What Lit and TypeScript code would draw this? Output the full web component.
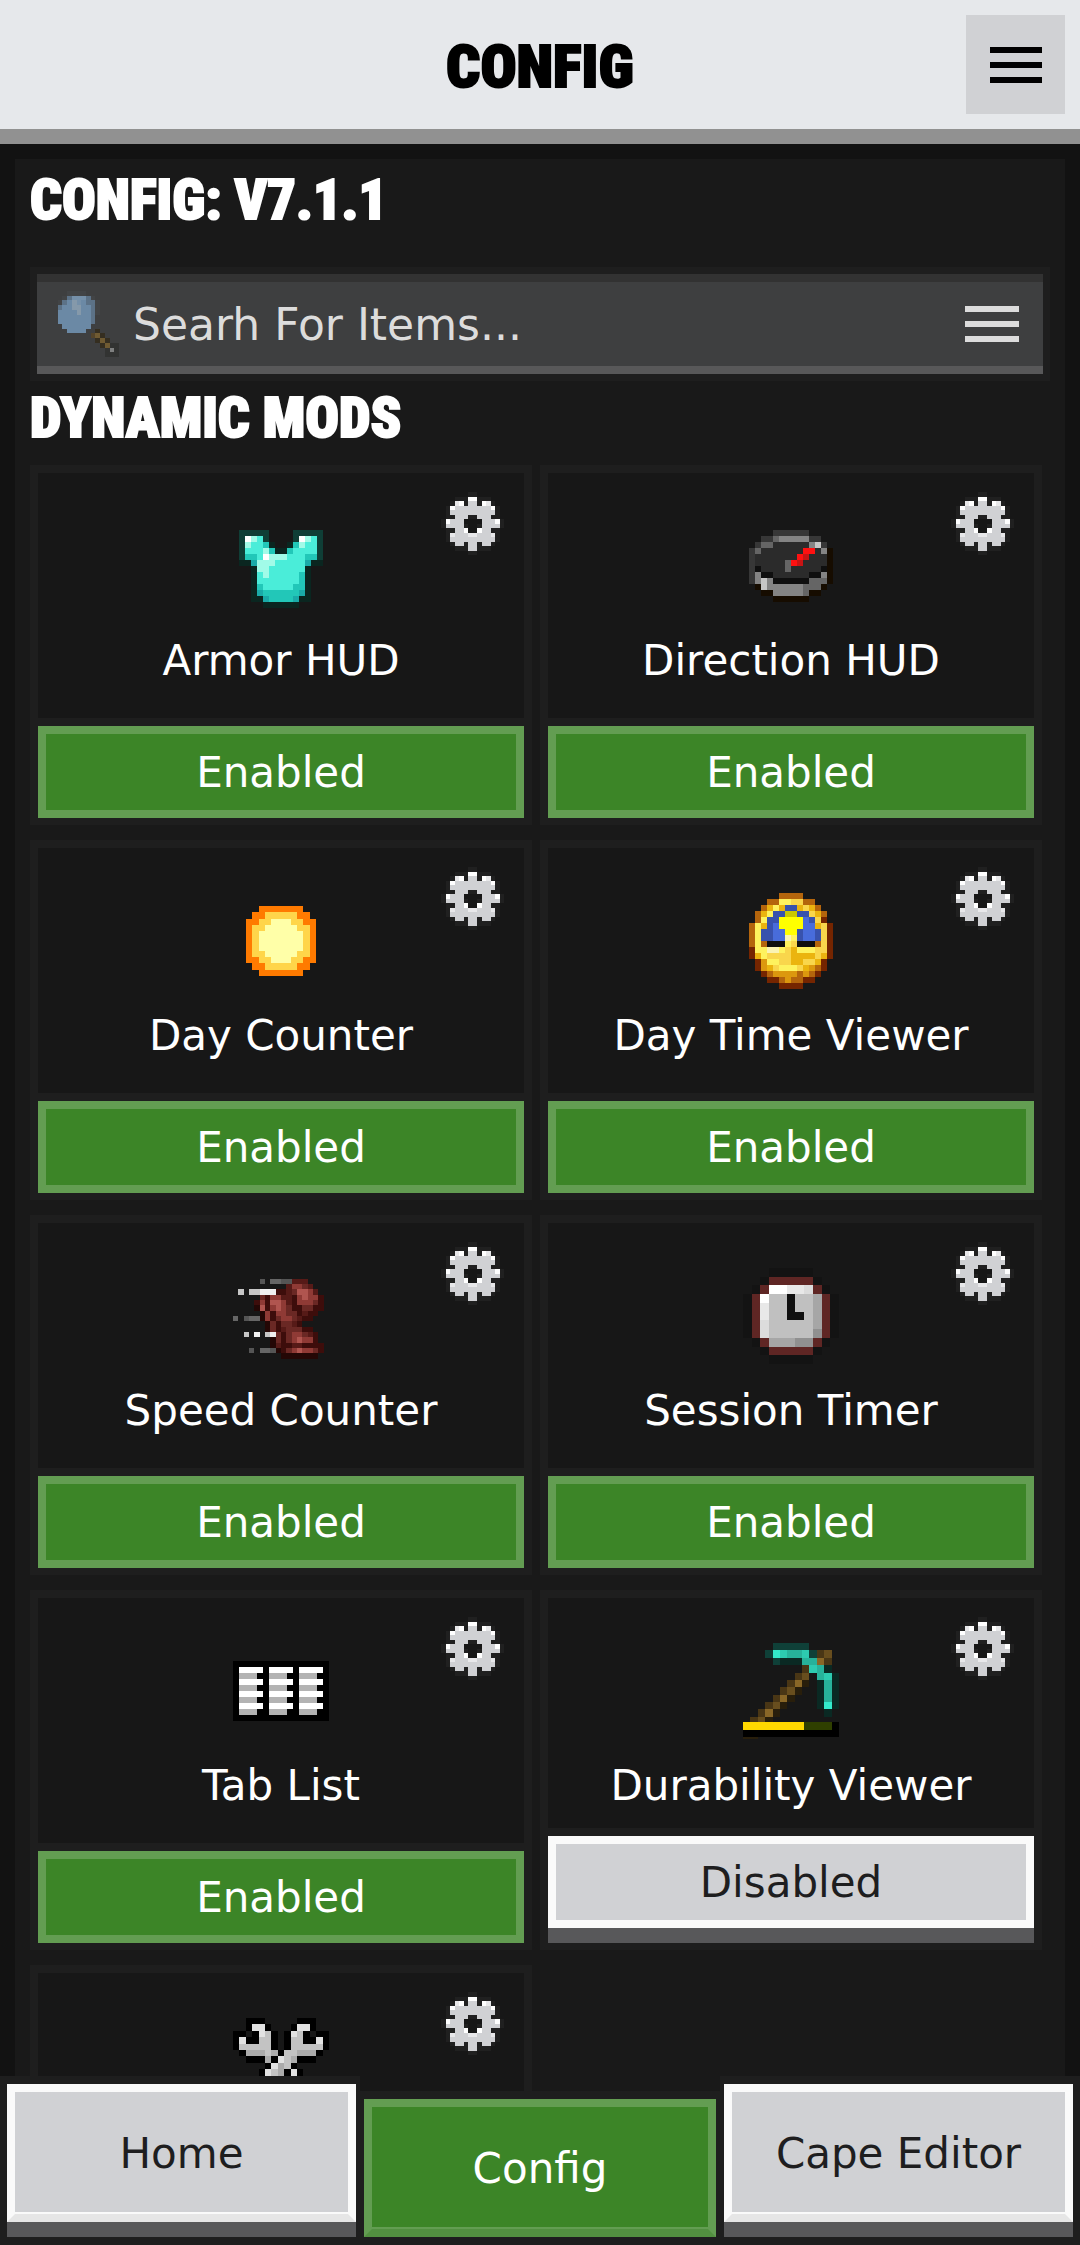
import { LitElement, html, svg, css, nothing } from "lit";
import { customElement, property, state } from "lit/decorators.js";

type Palette = Record<string, string>;
interface Sprite {
  cols: number;
  lines: number;
  rows: string[];
  colors: Palette;
}

const GEAR: Sprite = {
  cols: 14,
  lines: 14,
  colors: { k: "#202020", h: "#171717", W: "#ffffff", l: "#e8e8ea", g: "#d0d1d4" },
  rows: [
    "......kk......",
    "...kkkWWkkk...",
    "..klWkggkWlk..",
    ".kWggggggggWk.",
    ".kggggggggggk.",
    ".kkgggkkgggkk.",
    "kWggghhhhgggWk",
    "kggggkhhkggggk",
    ".kkggWhhWggkk.",
    ".klgggllggglk.",
    ".kggggggggggk.",
    "..kggkggkggk..",
    "...kkkggkkk...",
    "......kk......",
  ],
};

const LENS: Sprite = {
  cols: 14,
  lines: 14,
  colors: {
    f: "#424446", q: "#5c7287", B: "#6b89a5", m: "#7590a9", l: "#8599aa",
    d: "#352e20", t: "#54442a", T: "#6f5a32", e: "#323332", g: "#7f8080",
  },
  rows: [
    "...ffff.......",
    "..fqmmmqf.....",
    ".fqBlmBqqf....",
    ".qBBllBBqf....",
    ".BBBBlBBqf....",
    ".BBBBBBBq.....",
    ".BBBBBBBq.....",
    "..BBBBBB......",
    "...BBBB..d....",
    "........tTd...",
    ".........dTd..",
    "..........dTee",
    "...........ege",
    "...........eee",
  ],
};

const ARMOR: Sprite = {
  cols: 16,
  lines: 16,
  colors: {
    a: "#0f3e36", b: "#0a2620", W: "#ffffff", L: "#a1fbe8",
    M: "#4aedd9", D: "#22c7b8", E: "#1aaaa8",
  },
  rows: [
    "",
    "",
    ".aaaaa....aaaaa.",
    ".aWLMa....aWLMa.",
    ".aLMMDb..bDLMMa.",
    ".aMMMLDbbDMMMMa.",
    ".aDDMWLLLMMMDDa.",
    ".bbELLLMMMMMEbb.",
    "...bLLMMMMMMb...",
    "...bMLMMMMMDb...",
    "...bMMMMMMMDb...",
    "...bDMMMMMDDb...",
    "...bEDDDDDDEb...",
    "...bbEDDDDEbb...",
    ".....bbbbbb.....",
  ],
};

const COMPASS: Sprite = {
  cols: 16,
  lines: 16,
  colors: {
    d: "#373737", g: "#656565", G: "#848484", w: "#c6c6c6", k: "#2b2b2b",
    n: "#0f0f0f", R: "#ff1111", r: "#c91414", o: "#160c00",
  },
  rows: [
    "",
    "",
    ".....dddddd.....",
    "...ddgGGGGGdd...",
    "..dggkkkkkkGwd..",
    ".dgkkkkkkkRRkGo.",
    ".dkkkkkkkRrkkko.",
    ".dkkkkkgRrkkkko.",
    ".dnkkkkgkkkkkno.",
    ".dGnnkkkkkknnGo.",
    ".dGwGnnnnnngggo.",
    "..owGGGGGGgggo..",
    "...ooGGGGGgoo...",
    ".....oooooo.....",
  ],
};

const SUN: Sprite = {
  cols: 15,
  lines: 15,
  colors: { o: "#ff7a00", y: "#ffd54a", p: "#ffffa8" },
  rows: [
    "",
    "",
    "....ooooooo....",
    "...ooyyyyyoo...",
    "..ooyypppyyoo..",
    "..oyypppppyyo..",
    "..oypppppppyo..",
    "..oypppppppyo..",
    "..oypppppppyo..",
    "..oyypppppyyo..",
    "..ooyypppyyoo..",
    "...ooyyyyyoo...",
    "....ooooooo....",
  ],
};

const CLOCK: Sprite = {
  cols: 16,
  lines: 16,
  colors: {
    b: "#b4650c", y: "#fef25e", Y: "#f9d64c", G: "#ebb40f", g: "#dc980e",
    B: "#3852ad", S: "#486cdb", R: "#752500", o: "#cac800", Q: "#ffff00",
    K: "#0e0e0e", C: "#faf3b4",
  },
  rows: [
    "......bbbb......",
    "....bbyyYYbb....",
    "...bGyGBBGYGb...",
    "..bGyBBooBBYGb..",
    "..byBBQQQQSBYR..",
    ".byGBSQQQQSSGYR.",
    ".byBBSSQQBSSBYR.",
    ".byBBSSCyBSSBYR.",
    ".bybKKKyYKKKbYR.",
    ".RyyCCyYGyyyYYR.",
    ".RGyYYYYGGGGYGR.",
    "..RgyyYYGGYYGR..",
    "..RgGYyyyYGgbR..",
    "...RbggggbgbR...",
    "....RRbgbbRR....",
    "......RRRR......",
  ],
};

const BOOT: Sprite = {
  cols: 18,
  lines: 18,
  colors: {
    d: "#240705", e: "#3d0d0b", f: "#561a17", h: "#6a2824", i: "#8f3a35",
    j: "#b0554f", q: "#555555", t: "#666666", u: "#c6c6c6", v: "#f0f0f0",
  },
  rows: [
    "",
    "",
    ".....q.ttqqfff....",
    "..........fiihf...",
    ".u.uuvvveefhjjif..",
    ".....heiiffeijiie.",
    "....eiejjifeiiihe.",
    "....djeijiheehhee.",
    ".....dieiihhefee..",
    "t.qttdiehiihfee...",
    "......dhehhfe.....",
    "......dhefhhhee...",
    "..u.v.uvhehiihfe..",
    ".......dhehijiie..",
    ".......dfeeffeeee.",
    "...q.ttqdehijiihe.",
    ".........ddddddd..",
  ],
};

const WATCH: Sprite = {
  cols: 11,
  lines: 11,
  colors: {
    x: "#131313", r: "#5f2624", W: "#ffffff", e: "#e8e8e8", d: "#dcdcdc",
    s: "#c0c0c0", m: "#a6a6a6", n: "#909090", K: "#101010",
  },
  rows: [
    "...xxxxx...",
    "..xrrrrrx..",
    ".xrWWeedrx.",
    "xrWssKssmrx",
    "xressKssmrx",
    "xressKKsmrx",
    "xrdsssssmrx",
    "xrdsssssnrx",
    ".xrmmmnnrx.",
    "..xrrrrrx..",
    "...xxxxx...",
  ],
};

const TABS: Sprite = {
  cols: 16,
  lines: 16,
  colors: { K: "#000000", W: "#ffffff", s: "#b3b3b3" },
  rows: [
    "",
    "",
    "",
    "KKKKKKKKKKKKKKKK",
    "KWWWWKWWWWKWWWWK",
    "KsssKKsssKKsssKK",
    "KWWWWKWWWWKWWWWK",
    "KsssKKsssKKsssKK",
    "KWWWWKWWWWKWWWWK",
    "KsssKKsssKKsssKK",
    "KWWWWKWWWWKWWWWK",
    "KsssKKsssKKsssKK",
    "KKKKKKKKKKKKKKKK",
  ],
};

const PICKAXE: Sprite = {
  cols: 13,
  lines: 13,
  colors: {
    a: "#0f4038", b: "#0a2923", M: "#33ebcb", L: "#2dcbb0", T: "#27b29a",
    n: "#493615", m: "#684e1e", p: "#896727", k: "#281e0b",
  },
  rows: [
    "....aaaaa....",
    "...aMLTTLanm.",
    "....abbbTTpn.",
    "........nLTb.",
    ".......nm.TLb",
    "......npk.bTb",
    ".....nmk..bTb",
    "....npk...bTb",
    "...nmk....bMb",
    "..npk......b.",
    ".nmk.........",
    "",
    "kk...........",
  ],
};

const WRENCHES: Sprite = {
  cols: 15,
  lines: 15,
  colors: { K: "#000000", v: "#e2e2e2", s: "#c3c3c3", m: "#ababab" },
  rows: [
    "..KKK.....KKK..",
    "..KvvK...KvvK..",
    "KK.KvsK.KvsK.KK",
    "KvKKssK.KssKKvK",
    "KsssssK.KsssssK",
    ".KmmmsmKssmmmK.",
    "..KKKmKvsmKKK..",
    ".....KvmsK.....",
    "....KvsmKvK....",
    "...KvsmK.KvvK..",
    "..KvsmK...KvsK.",
    "..KsmK.....KsK.",
    "..KKK.......KK.",
  ],
};

const drawSprite = (sprite: Sprite) =>
  sprite.rows.flatMap((row, y) => {
    const runs: unknown[] = [];
    let x = 0;
    while (x < row.length) {
      const key = row[x];
      let end = x + 1;
      while (end < row.length && row[end] === key) end++;
      if (key !== ".") {
        runs.push(svg`<rect x=${x} y=${y} width=${end - x} height="1" fill=${sprite.colors[key]}></rect>`);
      }
      x = end;
    }
    return runs;
  });

@customElement("pixel-icon")
export class PixelIcon extends LitElement {
  @property({ attribute: false }) sprite!: Sprite;
  @property({ attribute: false }) overlay: unknown = null;

  static styles = css`
    :host {
      display: block;
    }
    .art {
      display: block;
      width: 100%;
      height: 100%;
    }
  `;

  render() {
    return html`<svg
      class="art"
      viewBox="0 0 ${this.sprite.cols} ${this.sprite.lines}"
      shape-rendering="crispEdges"
      aria-hidden="true"
    >
      ${drawSprite(this.sprite)}${this.overlay}
    </svg>`;
  }
}

const durabilityBar = svg`
  <rect x="0" y="10.65" width="13" height="2.05" fill="#000000"></rect>
  <rect x="0" y="10.65" width="12" height="1.1" fill="#2f3f00"></rect>
  <rect x="0" y="10.65" width="8.3" height="1.1" fill="#ffd800"></rect>`;

interface Mod {
  name?: string;
  sprite: Sprite;
  overlay?: unknown;
  enabled: boolean;
}

@customElement("mod-card")
export class ModCard extends LitElement {
  @property({ attribute: false }) mod!: Mod;

  static styles = css`
    :host {
      display: flex;
      flex-direction: column;
      gap: 8px;
      box-sizing: border-box;
      min-height: 360px;
      min-width: 0;
      padding: 8px 8px 7px;
      background: #1e1e1e;
    }
    .info {
      position: relative;
      flex: 1;
      display: flex;
      flex-direction: column;
      align-items: center;
      gap: 23px;
      padding: 45px 0 18px;
      background: #171717;
    }
    .icon {
      width: 96px;
      height: 96px;
    }
    .name {
      margin: 0;
      font-size: 42px;
      font-weight: 400;
      line-height: 48px;
      color: #ffffff;
      white-space: nowrap;
    }
    .settings {
      position: absolute;
      top: 19px;
      right: 20px;
      width: 63px;
      height: 63px;
      padding: 0;
      border: 0;
      background: none;
      cursor: pointer;
    }
    .gear {
      width: 63px;
      height: 63px;
    }
    .toggle {
      display: block;
      width: 100%;
      box-sizing: border-box;
      padding: 15px 0 13px;
      border: 8px solid #639d52;
      background: #3c8527;
      color: #ffffff;
      font: inherit;
      font-size: 42px;
      line-height: 48px;
      cursor: pointer;
    }
    .toggle.off {
      margin-bottom: 15px;
      border-color: #fafafa;
      background: #d0d1d4;
      color: #1e1e1f;
      box-shadow: 0 15px 0 #58585a;
    }
  `;

  private flip() {
    this.mod = { ...this.mod, enabled: !this.mod.enabled };
  }

  render() {
    const { name, sprite, overlay, enabled } = this.mod;
    return html`
      <div class="info">
        <pixel-icon class="icon" .sprite=${sprite} .overlay=${overlay ?? null}></pixel-icon>
        ${name ? html`<h3 class="name">${name}</h3>` : nothing}
        <button class="settings" type="button" aria-label="${name ?? "Mod"} settings">
          <pixel-icon class="gear" .sprite=${GEAR}></pixel-icon>
        </button>
      </div>
      ${name
        ? html`<button
            class="toggle ${enabled ? "" : "off"}"
            type="button"
            aria-pressed=${enabled ? "true" : "false"}
            @click=${this.flip}
          >${enabled ? "Enabled" : "Disabled"}</button>`
        : nothing}
    `;
  }
}

const MODS: Mod[] = [
  { name: "Armor HUD", sprite: ARMOR, enabled: true },
  { name: "Direction HUD", sprite: COMPASS, enabled: true },
  { name: "Day Counter", sprite: SUN, enabled: true },
  { name: "Day Time Viewer", sprite: CLOCK, enabled: true },
  { name: "Speed Counter", sprite: BOOT, enabled: true },
  { name: "Session Timer", sprite: WATCH, enabled: true },
  { name: "Tab List", sprite: TABS, enabled: true },
  { name: "Durability Viewer", sprite: PICKAXE, overlay: durabilityBar, enabled: false },
  { sprite: WRENCHES, enabled: true },
];

@customElement("app-root")
export class AppRoot extends LitElement {
  @state() private tab = "Config";

  static styles = css`
    :host {
      position: relative;
      display: flex;
      flex-direction: column;
      height: 100vh;
      overflow: hidden;
      background: #121212;
      font-family: "DejaVu Sans", sans-serif;
      color: #ffffff;
    }
    .bar {
      display: grid;
      grid-template-columns: 99px 1fr 99px;
      align-items: center;
      padding: 15px;
      border-bottom: 15px solid #919191;
      background: #e6e8eb;
      color: #000000;
    }
    .title,
    .heading {
      margin: 0;
      font-family: "Roboto Condensed", Roboto, sans-serif;
      font-size: 56px;
      font-weight: 900;
      line-height: 64px;
      text-transform: uppercase;
      -webkit-text-stroke: 2px currentColor;
    }
    .title {
      grid-column: 2;
      padding-top: 4px;
      font-size: 60px;
      text-align: center;
    }
    .menu,
    .filter {
      display: grid;
      place-items: center;
      padding: 0;
      border: 0;
      cursor: pointer;
    }
    .menu {
      height: 99px;
      background: #d0d1d4;
      color: #000000;
    }
    .scroll {
      flex: 1;
      min-height: 0;
      overflow-y: auto;
      scrollbar-width: none;
      padding: 15px 15px 0;
    }
    .panel {
      padding: 9px 15px 190px;
      background: #191919;
    }
    .search {
      display: flex;
      margin: 35px 0 5px;
      padding: 7px;
      background: #1e1e1e;
    }
    .field {
      flex: 1;
      display: flex;
      align-items: center;
      gap: 14px;
      min-width: 0;
      padding: 0 24px 0 16px;
      border-top: 8px solid #323232;
      border-bottom: 8px solid #585859;
      background: #3e3f40;
    }
    .lens {
      width: 66px;
      height: 66px;
    }
    .query {
      flex: 1;
      min-width: 0;
      height: 84px;
      padding: 0;
      border: 0;
      outline: 0;
      background: none;
      color: #dcdcdc;
      font: inherit;
      font-size: 44px;
    }
    .query::placeholder {
      color: #dcdcdc;
      opacity: 1;
    }
    .filter {
      background: none;
      color: #dcdcdc;
    }
    .mods {
      display: grid;
      grid-template-columns: repeat(2, minmax(0, 1fr));
      gap: 15px 8px;
      padding: 15px 8px 0 0;
    }
    .nav {
      position: absolute;
      inset: auto 0 0;
      display: grid;
      grid-template-columns: repeat(3, 1fr);
      align-items: end;
    }
    .slot {
      padding: 8px 4px;
      background: #1e1e1e;
    }
    .slot:first-child {
      padding-left: 7px;
    }
    .slot:last-child {
      padding-right: 7px;
    }
    .tab {
      display: block;
      width: 100%;
      box-sizing: border-box;
      height: 138px;
      margin-bottom: 15px;
      padding: 2px 0 0;
      border: 8px solid #fafafa;
      border-bottom-color: #e6e6e6;
      background: #d0d1d4;
      color: #1e1e1f;
      box-shadow: 0 15px 0 #58585a, inset 0 -2px 0 #fafafa;
      font: inherit;
      font-size: 42px;
      line-height: 48px;
      cursor: pointer;
    }
    .tab.on {
      margin-bottom: 0;
      border-color: #639d52;
      border-bottom-color: #529040;
      background: #3c8527;
      color: #ffffff;
      box-shadow: inset 0 -2px 0 #639d52;
    }
  `;

  private lines(width: number) {
    return html`<svg width=${width} height="36" viewBox="0 0 ${width} 36" fill="currentColor" shape-rendering="crispEdges" aria-hidden="true">
      <rect y="0" width=${width} height="6"></rect>
      <rect y="15" width=${width} height="6"></rect>
      <rect y="30" width=${width} height="6"></rect>
    </svg>`;
  }

  render() {
    return html`
      <header class="bar">
        <h1 class="title">Config</h1>
        <button class="menu" type="button" aria-label="Menu">${this.lines(52)}</button>
      </header>
      <main class="scroll">
        <div class="panel">
          <h2 class="heading">Config: v7.1.1</h2>
          <div class="search">
            <div class="field">
              <pixel-icon class="lens" .sprite=${LENS}></pixel-icon>
              <input class="query" type="text" placeholder="Searh For Items..." aria-label="Searh For Items..." />
              <button class="filter" type="button" aria-label="Filter">${this.lines(54)}</button>
            </div>
          </div>
          <h2 class="heading">Dynamic Mods</h2>
          <section class="mods">
            ${MODS.map((mod) => html`<mod-card .mod=${mod}></mod-card>`)}
          </section>
        </div>
      </main>
      <nav class="nav">
        ${["Home", "Config", "Cape Editor"].map(
          (name) => html`<div class="slot">
            <button
              class="tab ${this.tab === name ? "on" : ""}"
              type="button"
              @click=${() => (this.tab = name)}
            >${name}</button>
          </div>`
        )}
      </nav>
    `;
  }
}
